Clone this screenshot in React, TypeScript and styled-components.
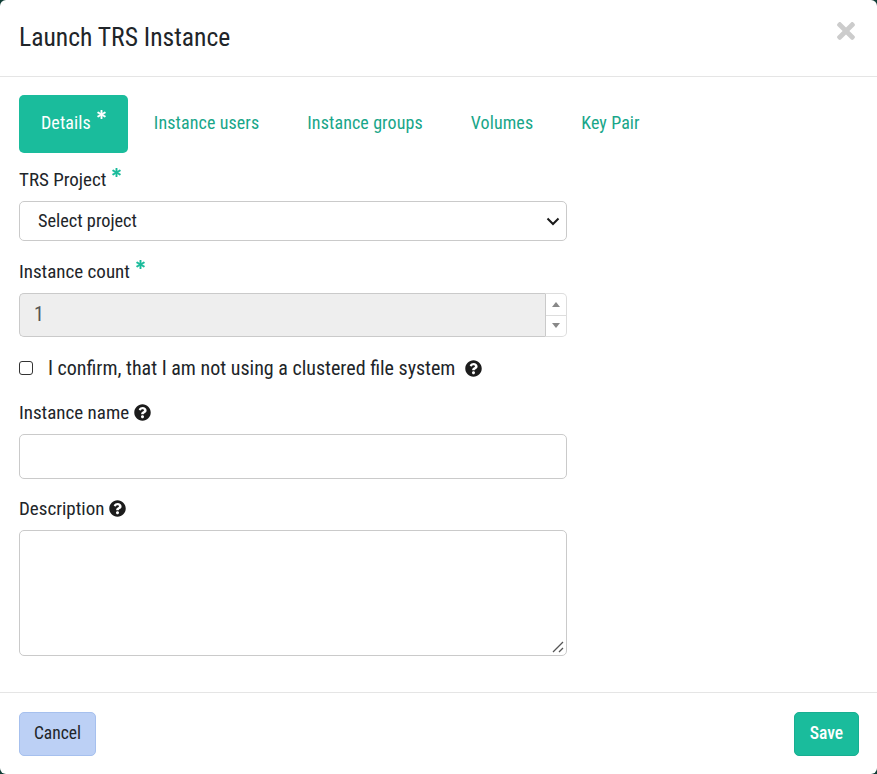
import { FunctionComponent, ReactNode } from 'react'
import { FaAsterisk, FaQuestionCircle, FaTimes } from 'react-icons/fa'
import { createGlobalStyle, styled } from 'styled-components'

const COLOR_GREEN = '#1abc9c'
const COLOR_TAB_TEXT = '#18a689'
const COLOR_TEXT = '#212529'
const COLOR_LINE = '#e5e5e5'
const COLOR_INPUT_BORDER = '#cacaca'
const FONT = "'Roboto', 'Liberation Sans', sans-serif"

const GlobalStyle = createGlobalStyle`
  html, body {
    margin: 0;
    padding: 0;
    height: 100%;
    background: #0f3d36;
  }
  body {
    font-family: ${FONT};
    font-stretch: 75%;
    color: ${COLOR_TEXT};
  }
  * { box-sizing: border-box; }
`

const Modal = styled.div`
  width: 877px;
  height: 774px;
  background: white;
  border-radius: 6px;
  display: flex;
  flex-direction: column;
  overflow: hidden;
`

const Header = styled.div`
  height: 77px;
  flex: none;
  border-bottom: 1px solid ${COLOR_LINE};
  padding: 0 18px 2px 19px;
  display: flex;
  align-items: center;
  justify-content: space-between;
`

const Title = styled.h4`
  margin: 0;
  font-size: 25.6px;
  font-weight: normal;
`

const CloseIcon = styled(FaTimes)`
  color: #cccccc;
  font-size: 26px;
  margin-top: -12px;
`

const Body = styled.div`
  flex: 1;
  padding: 18px 19px 0 19px;
  display: flex;
  flex-direction: column;
`

const Tabs = styled.div`
  display: flex;
  gap: 4px;
  margin-bottom: 15px;
`

const Tab = styled.a<{ $active?: boolean }>`
  height: 58px;
  padding: 0 22px 3px 22px;
  display: flex;
  align-items: center;
  border-radius: 5px;
  font-size: 18px;
  letter-spacing: 0.1px;
  background: ${(props) => (props.$active ? COLOR_GREEN : 'transparent')};
  color: ${(props) => (props.$active ? 'white' : COLOR_TAB_TEXT)};
`

const Star = styled(FaAsterisk)<{ $light?: boolean }>`
  font-size: 9px;
  stroke: currentColor;
  stroke-width: 24;
  color: ${(props) => (props.$light ? 'white' : COLOR_GREEN)};
  margin-left: 6px;
  align-self: flex-start;
`

const TabStar = styled(Star)`
  margin-top: 15px;
`

const Form = styled.div`
  width: 548px;
  display: flex;
  flex-direction: column;
`

const Label = styled.div<{ $top?: number }>`
  height: 22px;
  display: flex;
  align-items: center;
  font-size: 19px;
  margin-top: ${(props) => props.$top ?? 0}px;
  margin-bottom: 11px;
`

const HelpIcon = styled(FaQuestionCircle)`
  font-size: 17px;
  margin-left: 5px;
  color: #1c1c1c;
`

const SelectWrap = styled.div`
  position: relative;
  height: 40px;
`

const ProjectSelect = styled.select`
  width: 100%;
  height: 100%;
  padding: 0 0 2px 18px;
  appearance: none;
  border: 1px solid ${COLOR_INPUT_BORDER};
  border-radius: 5px;
  background: white;
  font-family: ${FONT};
  font-stretch: 75%;
  font-size: 18.3px;
  color: ${COLOR_TEXT};
`

const SelectArrow = styled.svg`
  position: absolute;
  right: 7px;
  top: 16px;
  width: 14px;
  height: 9px;
  pointer-events: none;
`

const CountRow = styled.div`
  display: flex;
  height: 44px;
`

const CountValue = styled.div`
  flex: 1;
  display: flex;
  align-items: center;
  padding: 0 0 3px 14px;
  background: #eeeeee;
  border: 1px solid ${COLOR_INPUT_BORDER};
  border-right: none;
  border-radius: 5px 0 0 5px;
  font-size: 20px;
  color: #555555;
`

const Spinner = styled.div`
  width: 22px;
  display: flex;
  flex-direction: column;
  border: 1px solid #dddddd;
  border-left: 1px solid ${COLOR_INPUT_BORDER};
  border-radius: 0 5px 5px 0;
`

const SpinButton = styled.div<{ $down?: boolean }>`
  flex: 1;
  display: flex;
  align-items: center;
  justify-content: center;
  border-top: ${(props) => (props.$down ? '1px solid #dddddd' : 'none')};
  &::before {
    content: '';
    border-left: 4.5px solid transparent;
    border-right: 4.5px solid transparent;
    border-${(props) => (props.$down ? 'top' : 'bottom')}: 5px solid #888888;
  }
`

const CheckRow = styled.label`
  display: flex;
  align-items: center;
  height: 22px;
  margin-top: 20px;
  font-size: 20px;
`

const Check = styled.input`
  appearance: none;
  width: 14px;
  height: 14px;
  margin: 0 15px 0 0;
  border: 1.5px solid #333333;
  border-radius: 3px;
  background: white;
`

const CheckHelp = styled(HelpIcon)`
  margin-left: 10px;
`

const TextInput = styled.input`
  width: 100%;
  height: 45px;
  border: 1px solid ${COLOR_INPUT_BORDER};
  border-radius: 5px;
  background: white;
`

const AreaWrap = styled.div`
  position: relative;
  height: 126px;
`

const TextArea = styled.textarea`
  display: block;
  width: 100%;
  height: 100%;
  resize: none;
  border: 1px solid ${COLOR_INPUT_BORDER};
  border-radius: 5px;
  background: white;
`

const AreaGrip = styled.svg`
  position: absolute;
  right: 3px;
  bottom: 3px;
  width: 12px;
  height: 12px;
  pointer-events: none;
`

const Footer = styled.div`
  flex: none;
  height: 82px;
  border-top: 1px solid ${COLOR_LINE};
  padding: 19px 18px 0 19px;
  display: flex;
  align-items: flex-start;
  justify-content: space-between;
`

const Button = styled.button<{ $primary?: boolean }>`
  height: 44px;
  padding: 0 0 3px 0;
  width: ${(props) => (props.$primary ? '65px' : '77px')};
  border-radius: 5px;
  border: 1px solid ${(props) => (props.$primary ? '#18ae91' : '#a6c0ee')};
  background: ${(props) => (props.$primary ? COLOR_GREEN : '#bcd0f5')};
  color: ${(props) => (props.$primary ? 'white' : COLOR_TEXT)};
  font-family: ${FONT};
  font-stretch: 75%;
  font-weight: ${(props) => (props.$primary ? 500 : 400)};
  font-size: 17.5px;
`

const Field: FunctionComponent<{ label: ReactNode; top?: number; children: ReactNode }> = ({
  label,
  top,
  children,
}) => (
  <>
    <Label $top={top}>{label}</Label>
    {children}
  </>
)

const TAB_NAMES = ['Instance users', 'Instance groups', 'Volumes', 'Key Pair']

export default function App() {
  return (
    <>
      <GlobalStyle />
      <Modal>
        <Header>
          <Title>Launch TRS Instance</Title>
          <CloseIcon />
        </Header>
        <Body>
          <Tabs>
            <Tab $active>
              Details
              <TabStar $light />
            </Tab>
            {TAB_NAMES.map((name) => (
              <Tab key={name}>{name}</Tab>
            ))}
          </Tabs>
          <Form>
            <Field
              label={
                <>
                  TRS Project
                  <Star />
                </>
              }
            >
              <SelectWrap>
                <ProjectSelect defaultValue="">
                  <option value="">Select project</option>
                </ProjectSelect>
                <SelectArrow viewBox="0 0 14 9">
                  <path d="M1.5 1.5 L7 7 L12.5 1.5" fill="none" stroke="#1a1a1a" strokeWidth="2" />
                </SelectArrow>
              </SelectWrap>
            </Field>
            <Field
              top={19}
              label={
                <>
                  Instance count
                  <Star />
                </>
              }
            >
              <CountRow>
                <CountValue>1</CountValue>
                <Spinner>
                  <SpinButton />
                  <SpinButton $down />
                </Spinner>
              </CountRow>
            </Field>
            <CheckRow>
              <Check type="checkbox" />I confirm, that I am not using a clustered file system
              <CheckHelp />
            </CheckRow>
            <Field
              top={22}
              label={
                <>
                  Instance name
                  <HelpIcon />
                </>
              }
            >
              <TextInput />
            </Field>
            <Field
              top={18}
              label={
                <>
                  Description
                  <HelpIcon />
                </>
              }
            >
              <AreaWrap>
                <TextArea />
                <AreaGrip viewBox="0 0 12 12">
                  <path d="M1 11 L11 1 M7 11 L11 7" stroke="#555555" strokeWidth="1.3" />
                </AreaGrip>
              </AreaWrap>
            </Field>
          </Form>
        </Body>
        <Footer>
          <Button>Cancel</Button>
          <Button $primary>Save</Button>
        </Footer>
      </Modal>
    </>
  )
}
